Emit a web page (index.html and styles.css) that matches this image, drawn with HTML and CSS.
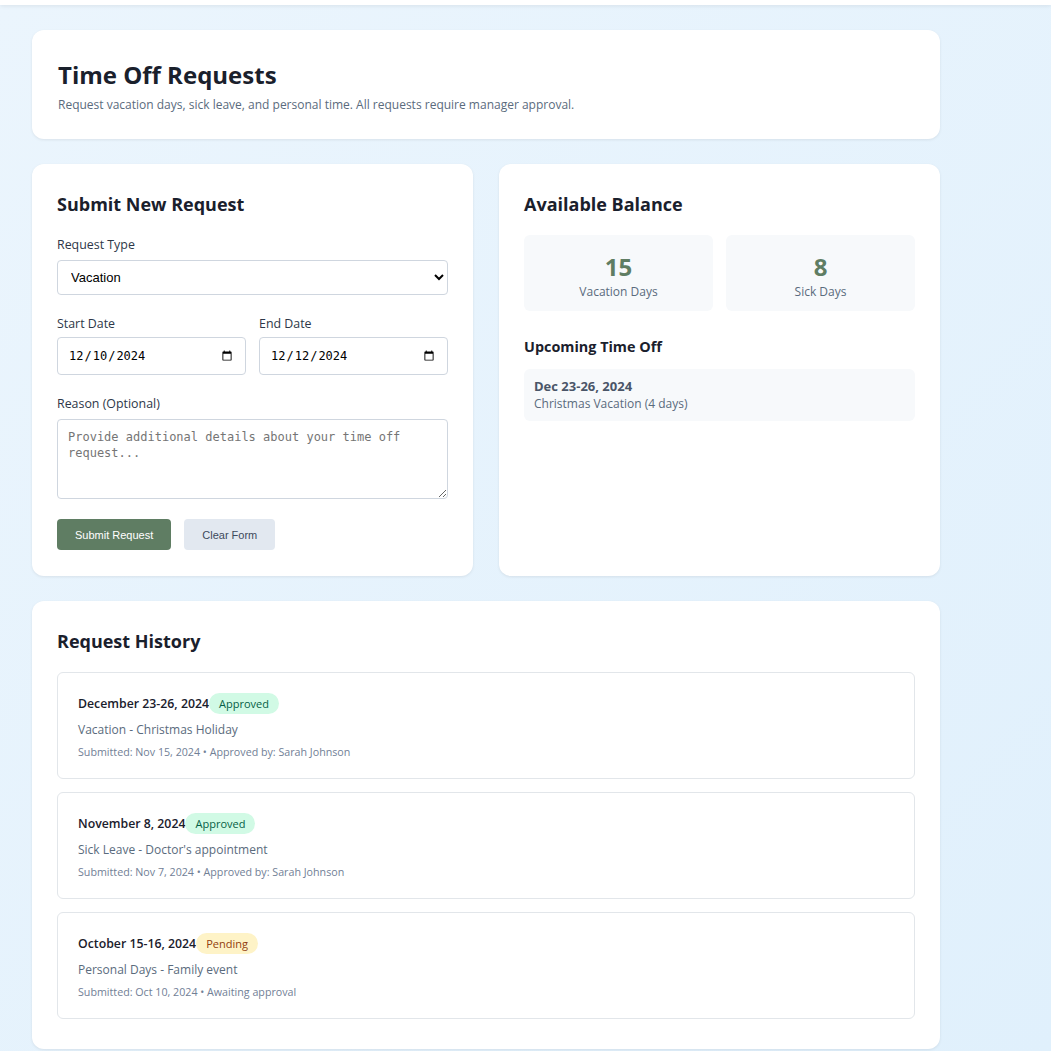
FILE: index.html
```html
<!DOCTYPE html>
<html lang="en">
<head>
<meta charset="utf-8">
<title>Time Off Requests</title>
<link rel="stylesheet" href="styles.css">
</head>
<body>
<div class="topbar"></div>
<main class="page">
  <section class="card header-card">
    <h1>Time Off Requests</h1>
    <p class="subtitle">Request vacation days, sick leave, and personal time. All requests require manager approval.</p>
  </section>

  <div class="columns">
    <section class="card form-card">
      <h2>Submit New Request</h2>
      <div class="field">
        <label class="label">Request Type</label>
        <select class="select">
          <option>Vacation</option>
          <option>Sick Leave</option>
          <option>Personal Days</option>
        </select>
      </div>
      <div class="date-row">
        <div class="field">
          <label class="label">Start Date</label>
          <input class="date" type="date" value="2024-12-10">
        </div>
        <div class="field">
          <label class="label">End Date</label>
          <input class="date" type="date" value="2024-12-12">
        </div>
      </div>
      <div class="field">
        <label class="label">Reason (Optional)</label>
        <textarea class="textarea" placeholder="Provide additional details about your time off request..."></textarea>
      </div>
      <div class="actions">
        <button class="btn btn-primary">Submit Request</button>
        <button class="btn btn-secondary">Clear Form</button>
      </div>
    </section>

    <section class="card">
      <h2>Available Balance</h2>
      <div class="balances">
        <div class="balance">
          <div class="balance-num">15</div>
          <div class="balance-label">Vacation Days</div>
        </div>
        <div class="balance">
          <div class="balance-num">8</div>
          <div class="balance-label">Sick Days</div>
        </div>
      </div>
      <h3>Upcoming Time Off</h3>
      <div class="upcoming">
        <div class="upcoming-date">Dec 23-26, 2024</div>
        <div class="upcoming-desc">Christmas Vacation (4 days)</div>
      </div>
    </section>
  </div>

  <section class="card history-card">
    <h2>Request History</h2>
    <div class="history">
      <div class="item">
        <div class="item-head"><span class="item-date">December 23-26, 2024</span><span class="badge approved">Approved</span></div>
        <div class="item-type">Vacation - Christmas Holiday</div>
        <div class="item-meta">Submitted: Nov 15, 2024 • Approved by: Sarah Johnson</div>
      </div>
      <div class="item">
        <div class="item-head"><span class="item-date">November 8, 2024</span><span class="badge approved">Approved</span></div>
        <div class="item-type">Sick Leave - Doctor's appointment</div>
        <div class="item-meta">Submitted: Nov 7, 2024 • Approved by: Sarah Johnson</div>
      </div>
      <div class="item">
        <div class="item-head"><span class="item-date">October 15-16, 2024</span><span class="badge pending">Pending</span></div>
        <div class="item-type">Personal Days - Family event</div>
        <div class="item-meta">Submitted: Oct 10, 2024 • Awaiting approval</div>
      </div>
    </div>
  </section>
</main>
</body>
</html>
```

FILE: styles.css
```css
* { box-sizing: border-box; }
html, body { margin: 0; }
body {
  font-family: "Open Sans", "Noto Sans", sans-serif;
  color: #1a202c;
  background: linear-gradient(135deg, #ebf5fd 0%, #e0f0fc 100%);
  min-height: 1051px;
}
.topbar {
  height: 5px;
  background: #fff;
  box-shadow: 0 1px 4px rgba(0,0,0,0.08);
}
.page {
  width: 908px;
  margin-left: 32px;
  padding-top: 25px;
  display: flex;
  flex-direction: column;
  gap: 25px;
}
.card {
  background: #fff;
  border-radius: 12px;
  padding: 25px;
  box-shadow: 0 1px 3px rgba(0,0,0,0.08);
}
.header-card { padding: 30px 26px 26px; }
h1 {
  margin: 0;
  font-size: 24px;
  font-weight: 700;
  line-height: 30px;
}
.subtitle {
  margin: 6px 0 0;
  font-size: 12px;
  color: #5a6b7d;
  line-height: 17px;
}
.columns {
  display: grid;
  grid-template-columns: 1fr 1fr;
  gap: 26px;
}
h2 {
  margin: 3px 0 19px;
  font-size: 18px;
  font-weight: 700;
  line-height: 24px;
}
.form-card { padding-bottom: 26px; }
.form-card h2 { margin-bottom: 20px; }
.field { display: flex; flex-direction: column; margin-bottom: 20px; }
.label {
  font-size: 12.4px;
  color: #2d3748;
  font-weight: 500;
  line-height: 18px;
  margin-bottom: 6px;
}
.date-row .label { margin-bottom: 4px; }
.select {
  height: 35px;
  border: 1px solid #cfd6df;
  border-radius: 4px;
  background: #fff;
  font-family: "Liberation Sans", Arial, sans-serif;
  font-size: 13px;
  padding: 0 9px;
  color: #000;
}
.date-row {
  display: grid;
  grid-template-columns: 1fr 1fr;
  gap: 13px;
}
.date {
  height: 38px;
  border: 1px solid #cfd6df;
  border-radius: 4px;
  font-family: "DejaVu Sans Mono", monospace;
  font-size: 12px;
  padding: 0 10px;
  color: #000;
}
.textarea {
  height: 80px;
  border: 1px solid #cfd6df;
  border-radius: 4px;
  font-family: "DejaVu Sans Mono", monospace;
  font-size: 12px;
  line-height: 16px;
  padding: 9px 10px;
  resize: vertical;
}
.textarea::placeholder { color: #757575; }
.actions { display: flex; gap: 13px; margin-top: 3px; }
.btn {
  height: 31px;
  border: none;
  border-radius: 4px;
  font-family: "Liberation Sans", Arial, sans-serif;
  font-size: 11px;
  font-weight: 500;
  padding: 0 18px;
  cursor: pointer;
}
.btn-primary { background: #5f7d63; color: #fff; }
.btn-secondary { background: #e2e8f0; color: #3d4a5c; }
.balances {
  display: grid;
  grid-template-columns: 1fr 1fr;
  gap: 13px;
  margin-bottom: 26px;
}
.balance {
  background: #f7f9fb;
  border-radius: 6px;
  height: 76px;
  display: flex;
  flex-direction: column;
  align-items: center;
  padding-top: 18px;
}
.balance-num {
  font-size: 24px;
  font-weight: 700;
  color: #5f7d63;
  line-height: 28px;
}
.balance-label {
  font-size: 12px;
  color: #5a6b7d;
  line-height: 17px;
  margin-top: 2px;
}
h3 {
  margin: 1px 0 12px;
  font-size: 14.4px;
  font-weight: 700;
  line-height: 20px;
}
.upcoming {
  background: #f7f9fb;
  border-radius: 6px;
  padding: 9px 10px;
}
.upcoming-date { font-size: 13px; font-weight: 700; color: #4a5568; line-height: 17px; }
.upcoming-desc { font-size: 12px; color: #5a6b7d; line-height: 17px; }
.history-card { padding-bottom: 30px; }
.history { display: flex; flex-direction: column; gap: 13px; }
.item {
  border: 1px solid #e2e6ea;
  border-radius: 6px;
  padding: 19px 20px 19px;
}
.item-head { display: flex; align-items: center; height: 22px; }
.item-date { font-size: 12.3px; font-weight: 600; color: #1a202c; }
.badge {
  font-size: 11px;
  padding: 0 10px;
  height: 21px;
  line-height: 21px;
  border-radius: 11px;
  font-weight: 500;
}
.approved { background: #d1fae5; color: #065f46; }
.pending { background: #fef3c7; color: #92400e; }
.item-type { font-size: 12px; color: #5a6b7d; margin-top: 7px; line-height: 18px; }
.item-meta { font-size: 10.7px; color: #718096; margin-top: 6px; line-height: 14px; }
```
